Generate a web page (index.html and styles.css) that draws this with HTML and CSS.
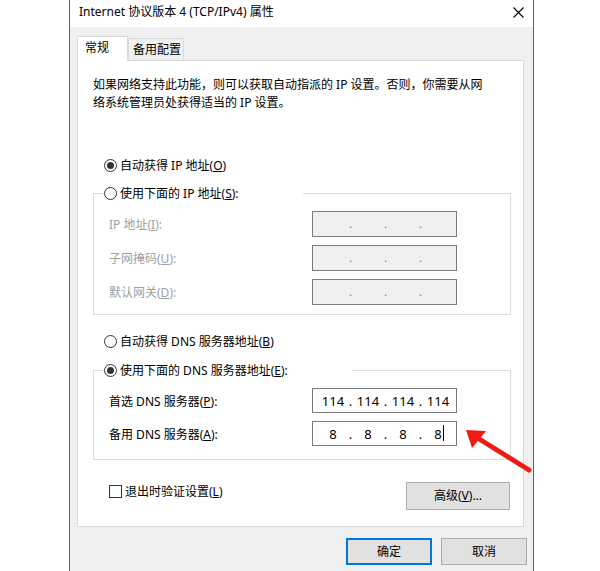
FILE: index.html
```html
<!DOCTYPE html>
<html lang="zh-CN">
<head>
  <meta charset="UTF-8">
  <title>Internet 协议版本 4 (TCP/IPv4) 属性</title>
  <link rel="stylesheet" href="styles.css">
</head>
<body>
  <div class="window">
    <!-- 标题栏 -->
    <div class="titlebar">
      <span class="title">Internet 协议版本 4 (TCP/IPv4) 属性</span>
      <svg class="close" width="11" height="11" viewBox="0 0 11 11">
        <path d="M0.5 0.5 L10.5 10.5 M10.5 0.5 L0.5 10.5" stroke="#000" stroke-width="1.1" fill="none"/>
      </svg>
    </div>

    <div class="content">
      <div class="tabs">
        <div class="tab active">常规</div>
        <div class="tab">备用配置</div>
      </div>

      <div class="panel">
        <p class="desc">如果网络支持此功能，则可以获取自动指派的 IP 设置。否则，你需要从网<br>络系统管理员处获得适当的 IP 设置。</p>

        <div class="radio r-first"><span class="dot on"></span><span>自动获得 IP 地址(<u>O</u>)</span></div>

        <fieldset class="group">
          <legend class="legend-ip"><span class="dot"></span><span>使用下面的 IP 地址(<u>S</u>):</span></legend>
          <div class="rows">
            <div class="field-row disabled">
              <span>IP 地址(<u>I</u>):</span>
              <div class="ip-box off"><span></span><i>.</i><span></span><i>.</i><span></span><i>.</i><span></span></div>
            </div>
            <div class="field-row disabled">
              <span>子网掩码(<u>U</u>):</span>
              <div class="ip-box off"><span></span><i>.</i><span></span><i>.</i><span></span><i>.</i><span></span></div>
            </div>
            <div class="field-row disabled">
              <span>默认网关(<u>D</u>):</span>
              <div class="ip-box off"><span></span><i>.</i><span></span><i>.</i><span></span><i>.</i><span></span></div>
            </div>
          </div>
        </fieldset>

        <div class="radio r-dns"><span class="dot"></span><span>自动获得 DNS 服务器地址(<u>B</u>)</span></div>

        <fieldset class="group group-dns">
          <legend class="legend-dns"><span class="dot on"></span><span>使用下面的 DNS 服务器地址(<u>E</u>):</span></legend>
          <div class="rows">
            <div class="field-row">
              <span>首选 DNS 服务器(<u>P</u>):</span>
              <div class="ip-box dns"><span>114</span><i>.</i><span>114</span><i>.</i><span>114</span><i>.</i><span>114</span></div>
            </div>
            <div class="field-row">
              <span>备用 DNS 服务器(<u>A</u>):</span>
              <div class="ip-box dns"><span>8</span><i>.</i><span>8</span><i>.</i><span>8</span><i>.</i><span><b class="caret">8</b></span></div>
            </div>
          </div>
        </fieldset>

        <div class="panel-foot">
          <div class="check"><span class="box"></span><span>退出时验证设置(<u>L</u>)</span></div>
          <button class="btn btn-adv">高级(<u>V</u>)...</button>
        </div>
      </div>

      <div class="footer">
        <button class="btn btn-main default">确定</button>
        <button class="btn btn-main">取消</button>
      </div>
    </div>
  </div>

  <!-- 标注箭头 -->
  <svg class="arrow" width="85" height="60" viewBox="0 0 85 60">
    <path d="M21 17 L74 50" stroke="#f21b14" stroke-width="5" stroke-linecap="round"/>
    <polygon points="11,10 31,11 17,28" fill="#f21b14"/>
  </svg>
</body>
</html>
```

FILE: styles.css
```css
* {
  box-sizing: border-box;
}

body {
  margin: 0;
  background: #fff;
  color: #000;
  font-family: "Noto Sans", "Noto Sans CJK SC", sans-serif;
  font-size: 12px;
  text-autospace: no-autospace;
}

/* 窗口 */
.window {
  width: 465px;
  min-height: 571px;
  margin-left: 69px;
  background: #f0f0f0;
  border-left: 1px solid #5f5f5f;
  border-right: 1px solid #5f5f5f;
}

.titlebar {
  height: 27px;
  padding: 0 9px 3px 9px;
  background: #fff;
  display: flex;
  align-items: center;
  justify-content: space-between;
}

.title {
  line-height: 18px;
}

.content {
  padding: 9px 6px 0 7px;
}

/* 标签页 */
.tabs {
  display: flex;
  align-items: flex-end;
  height: 24px;
}

.tab {
  height: 22px;
  line-height: 21px;
  width: 56px;
  padding-left: 4px;
  background: #f0f0f0;
  border: 1px solid #d9d9d9;
  border-bottom: none;
}

.tab.active {
  position: relative;
  z-index: 1;
  width: 51px;
  height: 25px;
  margin-bottom: -1px;
  padding-left: 7px;
  line-height: 22px;
  background: #fff;
}

.panel {
  background: #fff;
  border: 1px solid #d9d9d9;
  margin-right: 3px;
  padding: 0 12px 16px 15px;
}

.desc {
  margin: 15px 0 0;
  line-height: 18px;
}

/* 单选 */
.radio {
  display: flex;
  align-items: center;
  gap: 3px;
  height: 20px;
  padding-left: 11px;
}

.r-first {
  margin-top: 43px;
}

.r-dns {
  margin-top: 16px;
}

.dot {
  width: 13px;
  height: 13px;
  flex: none;
  border: 1px solid #333;
  border-radius: 50%;
  background: #fff;
  display: flex;
  align-items: center;
  justify-content: center;
}

.dot.on::after {
  content: "";
  width: 7px;
  height: 7px;
  border-radius: 50%;
  background: #333;
}

/* 分组框 */
.group {
  margin: 8px 0 0;
  padding: 8px 0 9px 10px;
  border: 1px solid #dcdcdc;
  min-width: 0;
}

.group-dns {
  margin-top: 9px;
  padding-bottom: 13px;
}

.group legend {
  padding: 0;
  height: 20px;
  display: flex;
  align-items: center;
  gap: 3px;
}

.legend-ip {
  width: 199px;
}

.legend-dns {
  width: 248px;
}

.rows {
  display: flex;
  flex-direction: column;
  gap: 8px;
}

.field-row {
  display: grid;
  grid-template-columns: 203px 145px;
  align-items: center;
  padding-left: 5px;
}

.field-row.disabled {
  color: #a0a0a0;
}

.ip-box {
  height: 25px;
  border: 1px solid #7a7a7a;
  background: #fff;
  padding-left: 5px;
  display: grid;
  grid-template-columns: 30px 5px 30px 5px 30px 5px 30px;
  align-items: center;
  text-align: center;
  line-height: 16px;
  font-size: 13px;
}

.ip-box i {
  font-style: normal;
}

.ip-box.off {
  height: 26px;
  background: #f0f0f0;
  color: #6d6d6d;
  font-size: 10px;
}

.caret {
  position: relative;
  font-weight: normal;
}

.caret::after {
  content: "";
  position: absolute;
  right: -2px;
  top: 0;
  width: 1px;
  height: 16px;
  background: #000;
}

/* 底部 */
.panel-foot {
  display: flex;
  justify-content: space-between;
  align-items: flex-start;
  margin-top: 22px;
  padding: 0 1px 0 16px;
}

.check {
  display: flex;
  align-items: center;
  gap: 3px;
  height: 18px;
}

.box {
  width: 13px;
  height: 13px;
  flex: none;
  border: 1px solid #333;
  background: #fff;
}

.btn {
  font: inherit;
  color: #000;
  background: #e1e1e1;
  border: 1px solid #adadad;
  padding: 0;
  line-height: 16px;
}

.btn-adv {
  width: 104px;
  height: 28px;
}

.footer {
  display: flex;
  justify-content: flex-end;
  gap: 9px;
  padding-top: 11px;
}

.btn-main {
  width: 86px;
  height: 27px;
}

.btn.default {
  border: 2px solid #0078d7;
}

.arrow {
  position: absolute;
  left: 455px;
  top: 420px;
}
```
